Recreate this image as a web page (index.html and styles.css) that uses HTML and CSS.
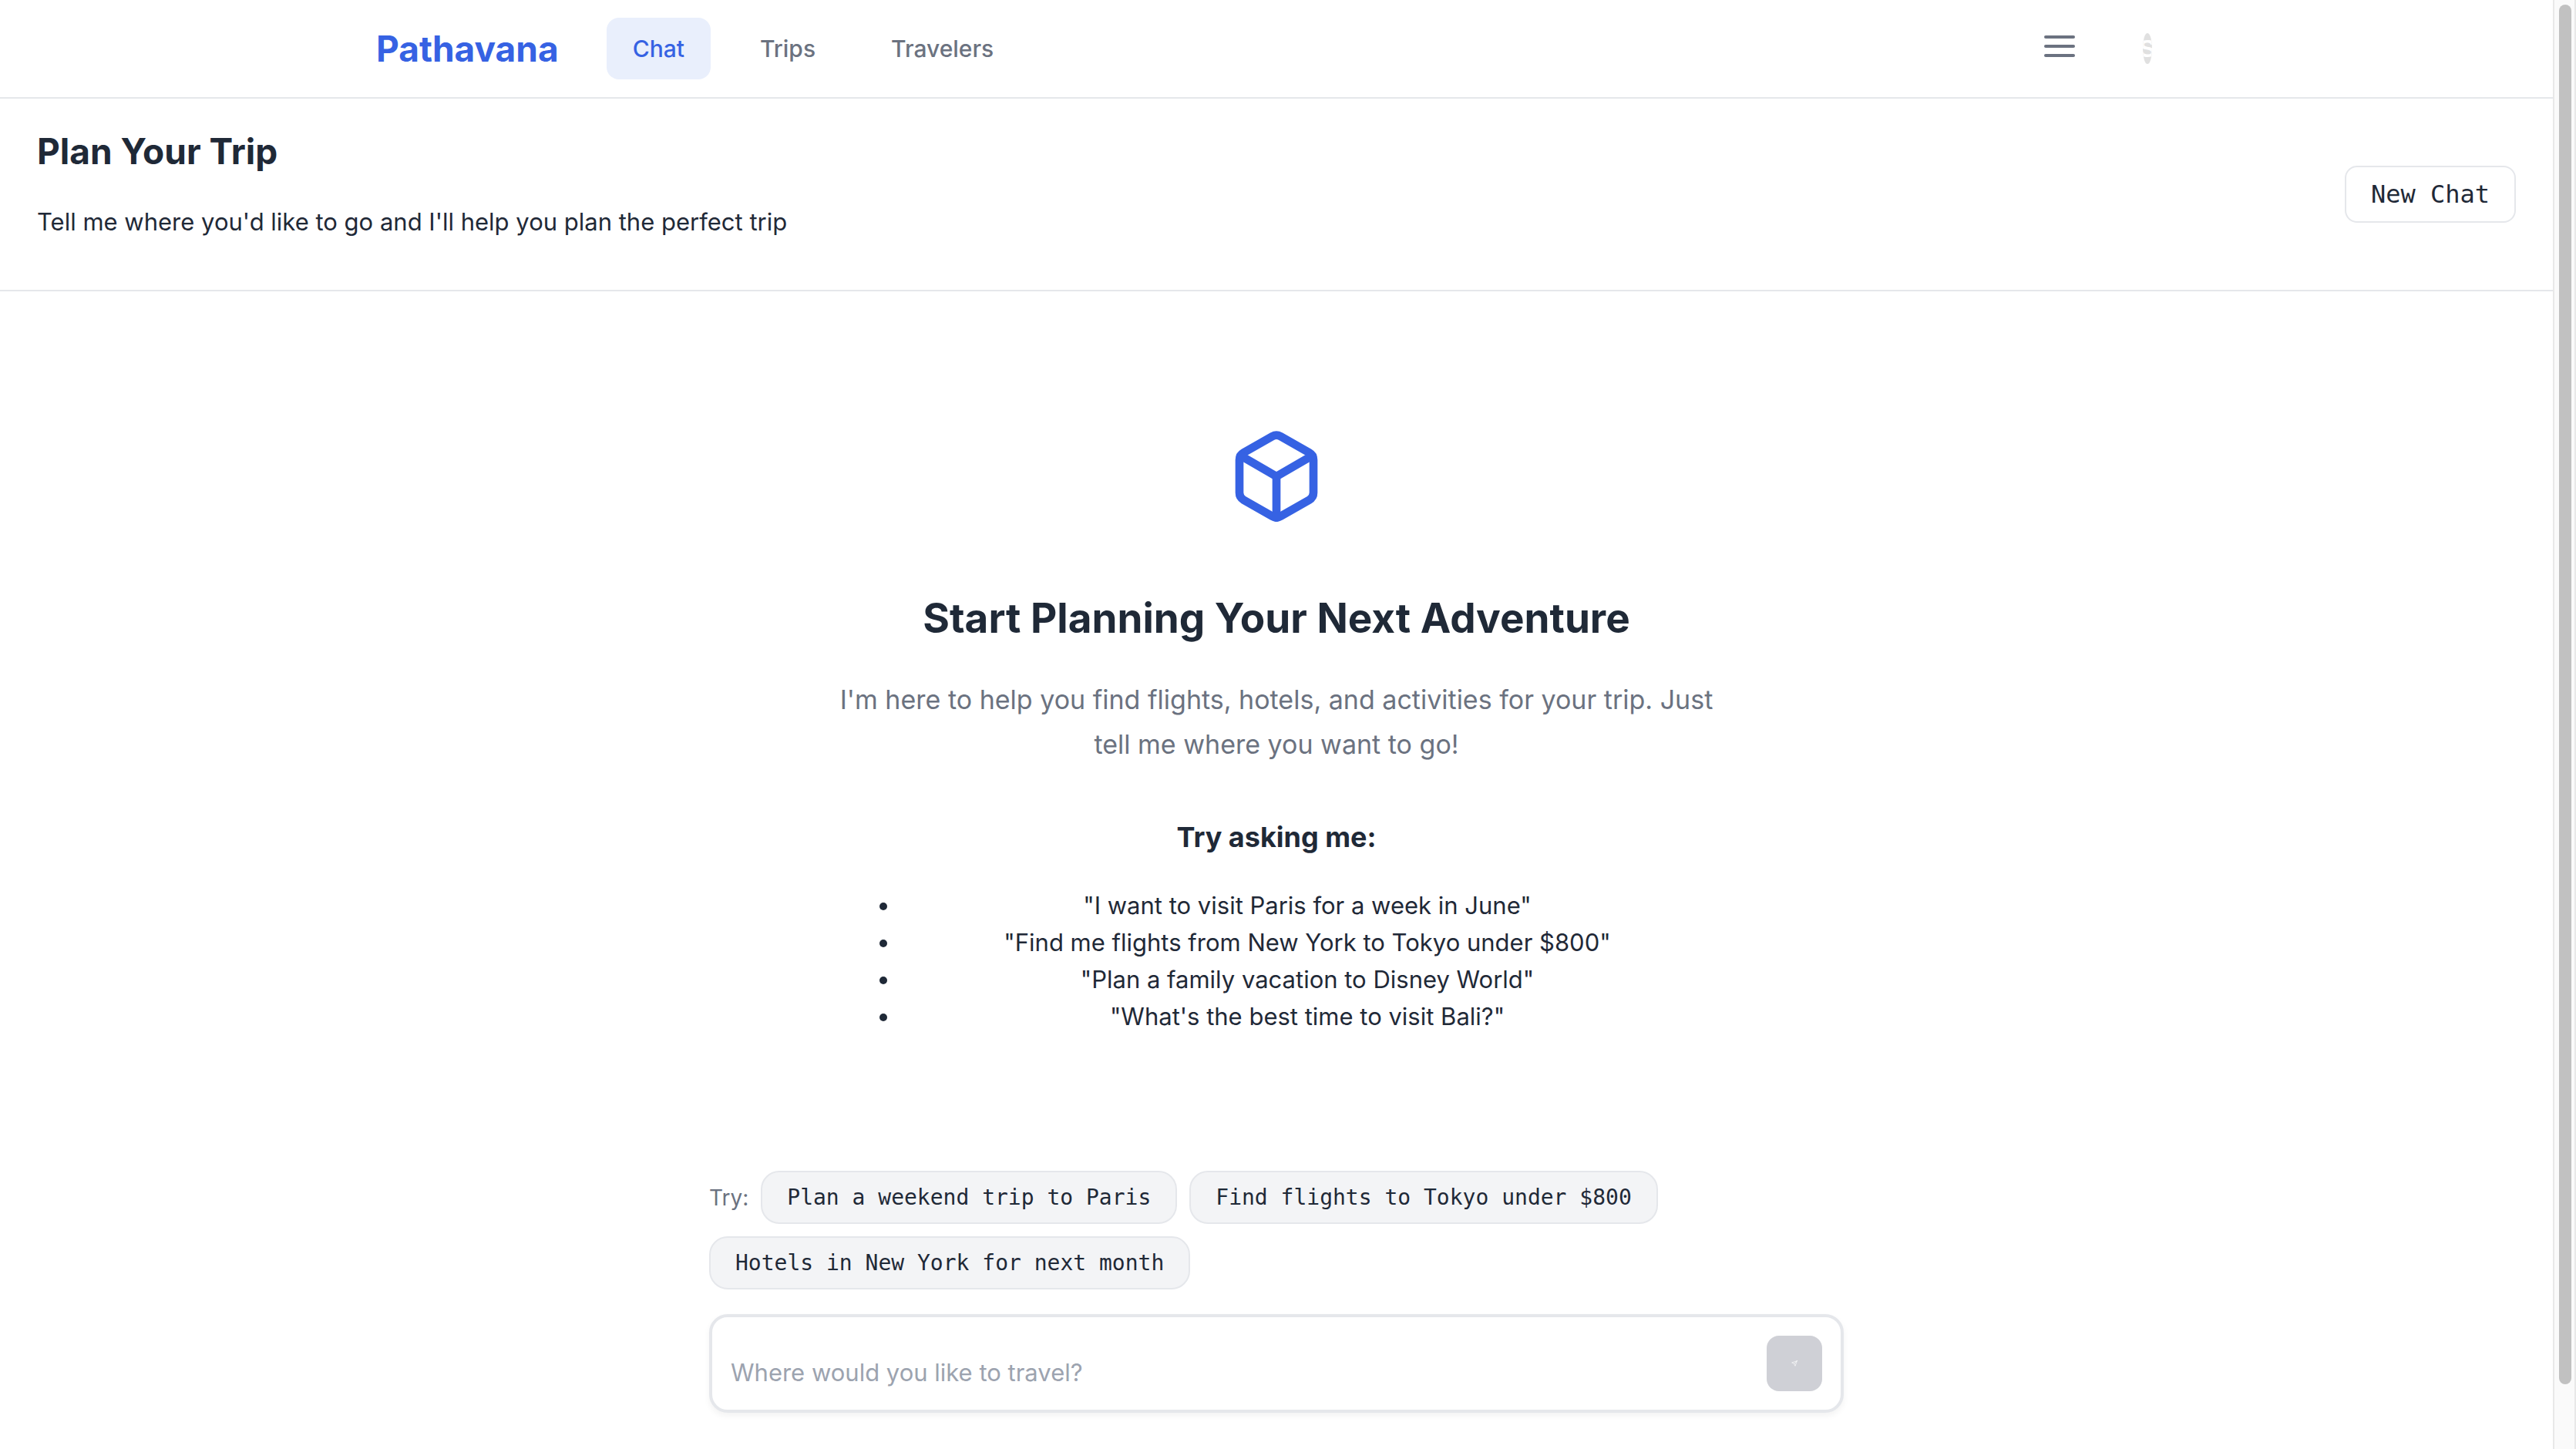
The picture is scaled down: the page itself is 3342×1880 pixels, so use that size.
FILE: index.html
```html
<!DOCTYPE html>
<html lang="en">
<head>
  <meta charset="utf-8">
  <meta name="viewport" content="width=device-width, initial-scale=1">
  <title>Pathavana</title>
  <link rel="stylesheet" href="styles.css">
</head>
<body>
  <div class="app">
    <header class="topbar">
      <div class="topbar-inner">
        <a class="logo" href="#">Pathavana</a>
        <nav class="nav">
          <a class="nav-link active" href="#">Chat</a>
          <a class="nav-link" href="#">Trips</a>
          <a class="nav-link" href="#">Travelers</a>
        </nav>
        <div class="actions">
          <button class="menu-button" type="button" aria-label="Menu">
            <svg class="menu-icon" viewBox="0 0 24 24" fill="none" stroke="currentColor" stroke-width="2" stroke-linecap="round">
              <line x1="3" y1="6" x2="21" y2="6"/>
              <line x1="3" y1="12" x2="21" y2="12"/>
              <line x1="3" y1="18" x2="21" y2="18"/>
            </svg>
          </button>
          <button class="avatar" type="button"><span>S</span></button>
        </div>
      </div>
    </header>

    <section class="page-head">
      <div>
        <h1>Plan Your Trip</h1>
        <p>Tell me where you'd like to go and I'll help you plan the perfect trip</p>
      </div>
      <button class="new-chat" type="button">New Chat</button>
    </section>

    <main class="chat">
      <section class="welcome">
        <svg class="box-icon" viewBox="0 0 24 24" fill="none" stroke="currentColor" stroke-width="2" stroke-linecap="round" stroke-linejoin="round" aria-hidden="true">
          <path d="M21 16V8a2 2 0 0 0-1-1.73l-7-4a2 2 0 0 0-2 0l-7 4A2 2 0 0 0 3 8v8a2 2 0 0 0 1 1.73l7 4a2 2 0 0 0 2 0l7-4A2 2 0 0 0 21 16z"/>
          <polyline points="3.27 6.96 12 12.01 20.73 6.96"/>
          <line x1="12" y1="22.08" x2="12" y2="12"/>
        </svg>
        <h2>Start Planning Your Next Adventure</h2>
        <p class="lead">I'm here to help you find flights, hotels, and activities for your trip. Just tell me where you want to go!</p>
        <h3>Try asking me:</h3>
        <ul>
          <li>"I want to visit Paris for a week in June"</li>
          <li>"Find me flights from New York to Tokyo under $800"</li>
          <li>"Plan a family vacation to Disney World"</li>
          <li>"What's the best time to visit Bali?"</li>
        </ul>
      </section>

      <form class="composer">
        <div class="suggestions">
          <span class="suggestions-label">Try:</span>
          <button class="chip" type="button">Plan a weekend trip to Paris</button>
          <button class="chip" type="button">Find flights to Tokyo under $800</button>
          <button class="chip" type="button">Hotels in New York for next month</button>
        </div>
        <div class="input-box">
          <textarea rows="1" aria-label="Message" placeholder="Where would you like to travel?"></textarea>
          <button class="send" type="submit" aria-label="Send" disabled>
            <svg class="send-icon" viewBox="0 0 24 24" fill="none" stroke="currentColor" stroke-width="2" stroke-linecap="round" stroke-linejoin="round">
              <line x1="22" y1="2" x2="11" y2="13"/>
              <polygon points="22 2 15 22 11 13 2 9 22 2"/>
            </svg>
          </button>
        </div>
      </form>
    </main>
  </div>
  <div class="scroll-track" aria-hidden="true"><div class="scroll-thumb"></div></div>
</body>
</html>
```
FILE: styles.css
```css
:root {
  --primary: #3662e3;
  --text: #1f2937;
  --muted: #6b7280;
  --border: #e5e7eb;
  --mono: "DejaVu Sans Mono", monospace;
}

* {
  box-sizing: border-box;
}

body {
  display: flex;
  min-height: 100vh;
  margin: 0;
  background: #fff;
  color: var(--text);
  font: 400 31px/48px Inter, sans-serif;
}

h1, h2, h3, p, ul {
  margin: 0;
}

button {
  border: 0;
  padding: 0;
  background: none;
  color: inherit;
}

.app {
  display: flex;
  flex: 1;
  flex-direction: column;
  min-width: 0;
}

/* Top bar */
.topbar {
  border-bottom: 2px solid var(--border);
}

.topbar-inner {
  display: flex;
  align-items: center;
  max-width: 2400px;
  margin: 0 auto;
  padding: 23px 32px;
}

.logo {
  color: var(--primary);
  font-size: 46px;
  font-weight: 700;
  text-decoration: none;
}

.nav {
  display: flex;
  gap: 30px;
  margin-left: 62px;
}

.nav-link {
  padding: 16px 34px;
  border-radius: 16px;
  color: var(--muted);
  font-size: 30px;
  font-weight: 500;
  text-decoration: none;
}

.nav-link.active {
  background: #e9effc;
  color: var(--primary);
}

.actions {
  display: flex;
  align-items: center;
  gap: 84px;
  margin-left: auto;
  padding-right: 32px;
}

.menu-button {
  padding-bottom: 6px;
  color: var(--muted);
}

.menu-icon {
  display: block;
  width: 48px;
  height: 48px;
}

.avatar {
  display: flex;
  align-items: center;
  justify-content: center;
  width: 12px;
  height: 40px;
  border-radius: 50%;
  overflow: hidden;
  background: #e0e0e0;
  color: #fff;
  font: 700 32px/40px "Liberation Sans", sans-serif;
}

/* Page heading */
.page-head {
  display: flex;
  align-items: center;
  justify-content: space-between;
  padding: 32px 48px;
  border-bottom: 2px solid var(--border);
}

.page-head h1 {
  font-size: 46px;
  font-weight: 700;
  line-height: 72px;
}

.page-head p {
  margin: 32px 0;
}

.new-chat {
  padding: 16px 32px;
  border: 2px solid var(--border);
  border-radius: 16px;
  background: #fff;
  font: 32px/38px var(--mono);
}

/* Welcome */
.chat {
  display: flex;
  flex: 1;
  flex-direction: column;
  align-items: center;
}

.welcome {
  display: flex;
  flex-direction: column;
  align-items: center;
  width: 100%;
  max-width: 1184px;
  padding: 176px 32px 64px;
  text-align: center;
}

.box-icon {
  width: 128px;
  height: 128px;
  color: var(--primary);
}

.welcome h2 {
  margin-top: 78px;
  font-size: 53px;
  font-weight: 700;
  line-height: 84px;
}

.lead {
  margin: 35px -32px 0;
  color: var(--muted);
  font-size: 34px;
  line-height: 58px;
}

.welcome h3 {
  margin-top: 63px;
  font-size: 36px;
  font-weight: 700;
  line-height: 56px;
}

.welcome ul {
  width: 100%;
  margin-top: 37px;
  padding-left: 72px;
}

.welcome li {
  padding-left: 8px;
}

/* Composer */
.composer {
  width: 100%;
  max-width: 1536px;
  margin-top: auto;
  padding: 0 32px 47px;
}

.suggestions {
  display: flex;
  flex-wrap: wrap;
  align-items: center;
  gap: 16px;
}

.suggestions-label {
  color: var(--muted);
  font-size: 28px;
}

.chip {
  padding: 16px 32px;
  border: 2px solid var(--border);
  border-radius: 24px;
  background: #f3f4f6;
  font: 28px/33px var(--mono);
}

.input-box {
  display: flex;
  align-items: flex-end;
  gap: 24px;
  margin-top: 32px;
  padding: 24px;
  border: 4px solid var(--border);
  border-radius: 24px;
  background: #fff;
  box-shadow: 0 4px 8px rgba(0, 0, 0, 0.05);
}

.input-box textarea {
  flex: 1;
  height: 48px;
  padding: 0;
  border: 0;
  outline: 0;
  resize: none;
  overflow: hidden;
  background: none;
  color: inherit;
  font: inherit;
}

.input-box textarea::placeholder {
  color: #9ca3af;
}

.send {
  display: flex;
  align-items: center;
  justify-content: center;
  width: 72px;
  height: 72px;
  border-radius: 16px;
  background: #cfd0d6;
  color: #fff;
}

.send-icon {
  width: 8px;
  height: 8px;
}

/* Scroll bar column */
.scroll-track {
  width: 30px;
  padding: 6px 4px 84px 6px;
  border: solid #e8e8e8;
  border-width: 0 2px;
  background: #fafafa;
}

.scroll-thumb {
  width: 16px;
  height: 100%;
  border-radius: 8px;
  background: #c1c1c1;
}
```
